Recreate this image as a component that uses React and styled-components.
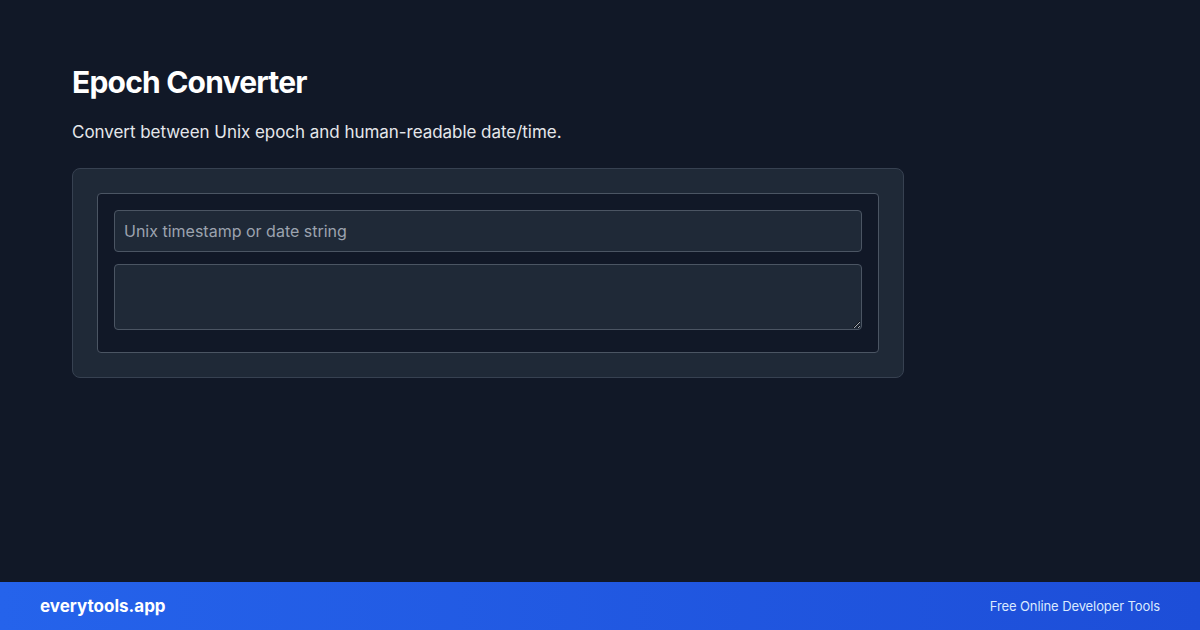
import React, {useState} from 'react';
import styled, {createGlobalStyle} from 'styled-components';

const GlobalStyle = createGlobalStyle`
    html, body {
        margin: 0;
        padding: 0;
        background: #111827;
        font-family: Inter, "Noto Sans", sans-serif;
    }
    * {
        box-sizing: border-box;
    }
`;

const Page = styled.div`
    display: flex;
    flex-direction: column;
    width: 1200px;
    height: 630px;
    background: #111827;
    color: #f9fafb;
`;

const Main = styled.main`
    flex: 1;
    padding: 64px 72px 0;
`;

const Title = styled.h1`
    margin: 0;
    font-size: 30px;
    line-height: 36px;
    font-weight: 700;
    letter-spacing: -0.8px;
    color: #ffffff;
`;

const Subtitle = styled.p`
    margin: 20px 0 0;
    font-size: 17px;
    line-height: 24px;
    letter-spacing: -0.04px;
    color: #e5e7eb;
`;

const Card = styled.section`
    margin-top: 24px;
    width: 832px;
    padding: 24px;
    background: #1f2937;
    border: 1px solid #374151;
    border-radius: 8px;
`;

const Tool = styled.div`
    display: flex;
    flex-direction: column;
    gap: 12px;
    padding: 16px 16px 22px;
    background: #111827;
    border: 1px solid #4b5563;
    border-radius: 4px;
`;

const Field = styled.input`
    height: 42px;
    padding: 0 9px;
    background: #1f2937;
    border: 1px solid #4b5563;
    border-radius: 4px;
    color: #f3f4f6;
    font-family: inherit;
    font-size: 16px;
    outline: none;
    &::placeholder {
        color: #9ca3af;
    }
`;

const Output = styled.textarea`
    display: block;
    height: 66px;
    padding: 8px 9px;
    background: #1f2937;
    border: 1px solid #4b5563;
    border-radius: 4px;
    color: #f3f4f6;
    font-family: inherit;
    font-size: 16px;
    outline: none;
`;

const Footer = styled.footer`
    display: flex;
    align-items: center;
    justify-content: space-between;
    height: 48px;
    padding: 0 40px;
    background: linear-gradient(90deg, #2563eb, #1d4ed8);
`;

const Brand = styled.span`
    font-size: 17px;
    font-weight: 700;
    color: #ffffff;
`;

const Tagline = styled.span`
    font-size: 13px;
    letter-spacing: -0.1px;
    color: #dbeafe;
`;

const App = () => {
    const [value, setValue] = useState("");

    return (
        <Page>
            <GlobalStyle />
            <Main>
                <Title>Epoch Converter</Title>
                <Subtitle>Convert between Unix epoch and human-readable date/time.</Subtitle>
                <Card>
                    <Tool>
                        <Field
                            type="text"
                            placeholder="Unix timestamp or date string"
                            value={value}
                            onChange={(e) => setValue(e.target.value)}
                        />
                        <Output readOnly />
                    </Tool>
                </Card>
            </Main>
            <Footer>
                <Brand>everytools.app</Brand>
                <Tagline>Free Online Developer Tools</Tagline>
            </Footer>
        </Page>
    );
};

export default App;
